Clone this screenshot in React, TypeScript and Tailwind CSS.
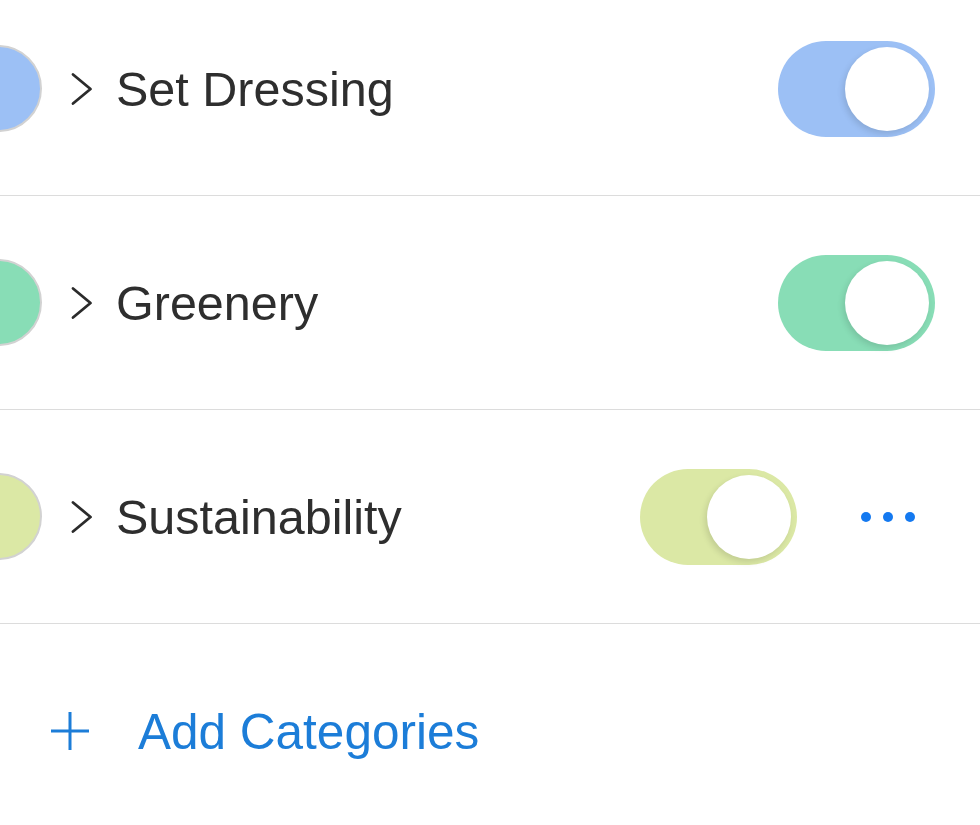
const categories = [
  { name: "Set Dressing", color: "bg-[#9cc0f5]", more: false },
  { name: "Greenery", color: "bg-[#88ddb6]", more: false },
  { name: "Sustainability", color: "bg-[#dbe8a5]", more: true },
];

function Chevron() {
  return (
    <svg width="24" height="34" viewBox="0 0 24 34" fill="none">
      <path
        d="M3 2.5 L20.5 17 L3 31.5"
        stroke="#2b2b2b"
        strokeWidth="2.8"
        strokeLinecap="round"
        strokeLinejoin="round"
      />
    </svg>
  );
}

function Toggle({ color }: { color: string }) {
  return (
    <div className={`flex h-[96px] w-[157px] items-center justify-end rounded-full p-[6px] ${color}`}>
      <div className="h-[84px] w-[84px] rounded-full bg-white shadow-[-2px_3px_6px_rgba(0,0,0,0.12)]" />
    </div>
  );
}

function CategoryRow({ name, color, more }: { name: string; color: string; more: boolean }) {
  return (
    <div className="flex h-[214px] items-center border-b-[1.5px] border-[#dcdcdc]">
      <div className={`-ml-[45px] h-[87px] w-[87px] shrink-0 rounded-full border-2 border-[#d2d2d2] ${color}`} />
      <div className="ml-[28px] flex items-center">
        <Chevron />
      </div>
      <p className="ml-[22px] mt-[2px] text-[48.5px] leading-none text-[#2e2e2e]">{name}</p>
      <div className="ml-auto flex items-center">
        <Toggle color={color} />
        {more ? (
          <div className="ml-[64px] mr-[65px] flex items-center gap-[12px]">
            <span className="h-[10px] w-[10px] rounded-full bg-[#1479f0]" />
            <span className="h-[10px] w-[10px] rounded-full bg-[#1479f0]" />
            <span className="h-[10px] w-[10px] rounded-full bg-[#1479f0]" />
          </div>
        ) : (
          <div className="w-[45px]" />
        )}
      </div>
    </div>
  );
}

export default function App() {
  return (
    <div className="h-[825px] w-[980px] overflow-hidden bg-white font-['Liberation_Sans',Arial,sans-serif]">
      <div className="-mt-[18px]">
        {categories.map((c) => (
          <CategoryRow key={c.name} {...c} />
        ))}
        <button className="flex h-[214px] w-full items-center">
          <svg className="ml-[50px]" width="40" height="40" viewBox="0 0 40 40">
            <path d="M20 1 V39 M1 20 H39" stroke="#1c7dd8" strokeWidth="3" />
          </svg>
          <span className="ml-[48px] mt-[2px] text-[49.5px] leading-none text-[#1c7dd8]">Add Categories</span>
        </button>
      </div>
    </div>
  );
}
